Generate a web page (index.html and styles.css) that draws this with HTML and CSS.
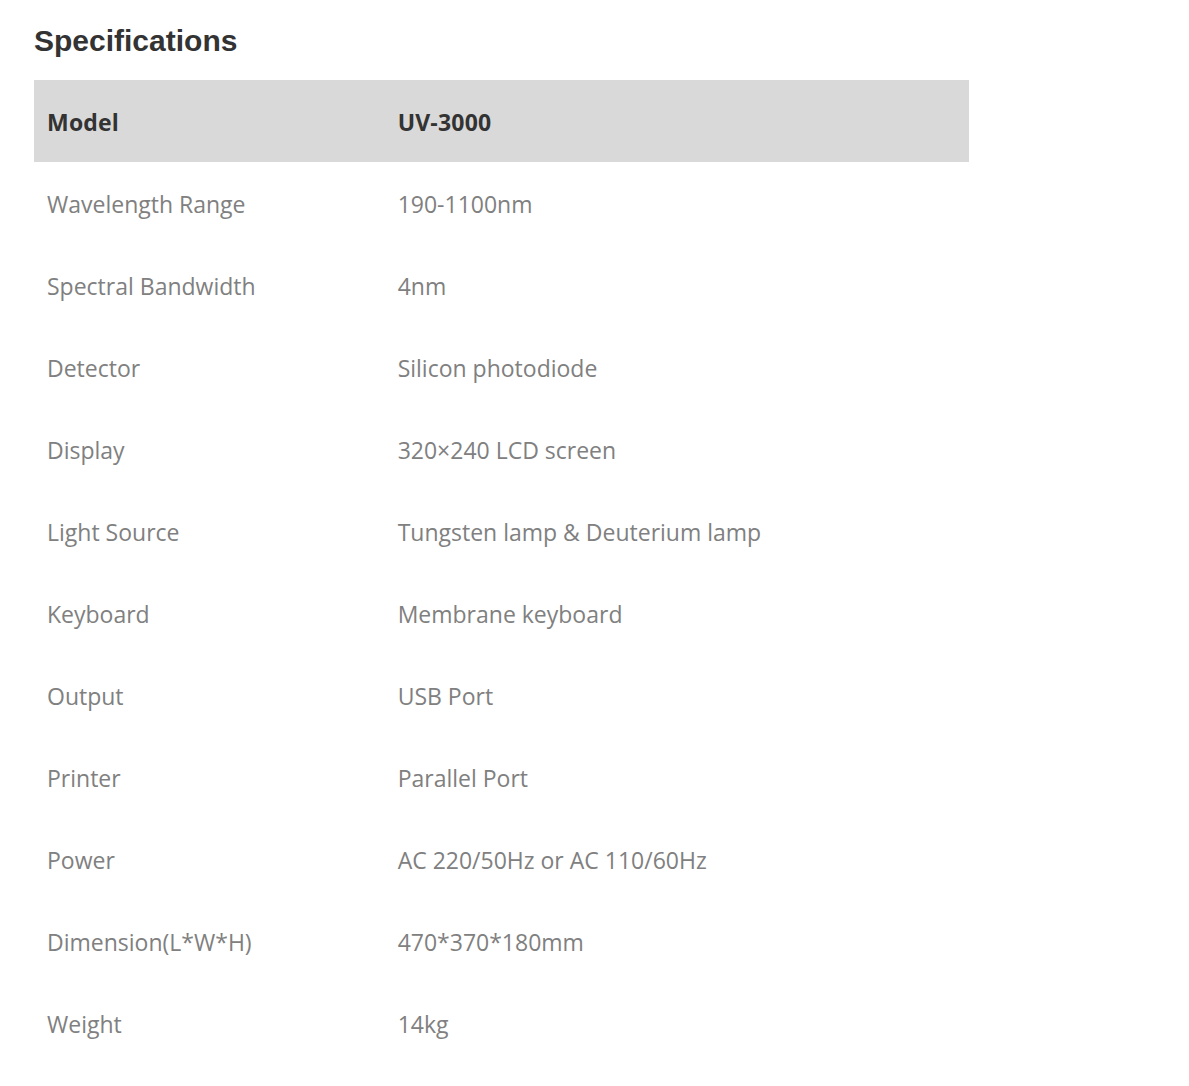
FILE: index.html
```html
<!DOCTYPE html>
<html lang="en">
<head>
<meta charset="utf-8">
<title>Specifications</title>
<link rel="stylesheet" href="styles.css">
</head>
<body>
<section class="specs">
  <h2 class="specs-title">Specifications</h2>
  <table class="spec-table">
    <colgroup><col class="col-name"><col class="col-value"></colgroup>
    <thead>
      <tr><th>Model</th><th>UV-3000</th></tr>
    </thead>
    <tbody>
      <tr><td>Wavelength Range</td><td>190-1100nm</td></tr>
      <tr><td>Spectral Bandwidth</td><td>4nm</td></tr>
      <tr><td>Detector</td><td>Silicon photodiode</td></tr>
      <tr><td>Display</td><td>320×240 LCD screen</td></tr>
      <tr><td>Light Source</td><td>Tungsten lamp &amp; Deuterium lamp</td></tr>
      <tr><td>Keyboard</td><td>Membrane keyboard</td></tr>
      <tr><td>Output</td><td>USB Port</td></tr>
      <tr><td>Printer</td><td>Parallel Port</td></tr>
      <tr><td>Power</td><td>AC 220/50Hz or AC 110/60Hz</td></tr>
      <tr><td>Dimension(L*W*H)</td><td>470*370*180mm</td></tr>
      <tr><td>Weight</td><td>14kg</td></tr>
    </tbody>
  </table>
</section>
</body>
</html>
```
FILE: styles.css
```css
html, body {
  margin: 0;
  padding: 0;
  background: #ffffff;
}
.specs {
  padding: 23px 0 0 34px;
  width: 935px;
}
.specs-title {
  margin: 0 0 21px 0;
  font-family: "Liberation Sans", Arial, sans-serif;
  font-size: 30px;
  line-height: 36px;
  font-weight: bold;
  color: #333333;
}
.spec-table {
  width: 935px;
  border-collapse: collapse;
  table-layout: fixed;
  font-family: "Open Sans", "Noto Sans", sans-serif;
  font-size: 23px;
}
.col-name { width: 37.5%; }
.spec-table th,
.spec-table td {
  height: 82px;
  padding: 2px 13px 0 13px;
  text-align: left;
  vertical-align: middle;
  box-sizing: border-box;
  line-height: 30px;
}
.spec-table thead tr {
  background: #d9d9d9;
}
.spec-table th {
  font-weight: bold;
  color: #333333;
  letter-spacing: 0.2px;
}
.spec-table td {
  color: #808080;
  font-weight: normal;
}
```
